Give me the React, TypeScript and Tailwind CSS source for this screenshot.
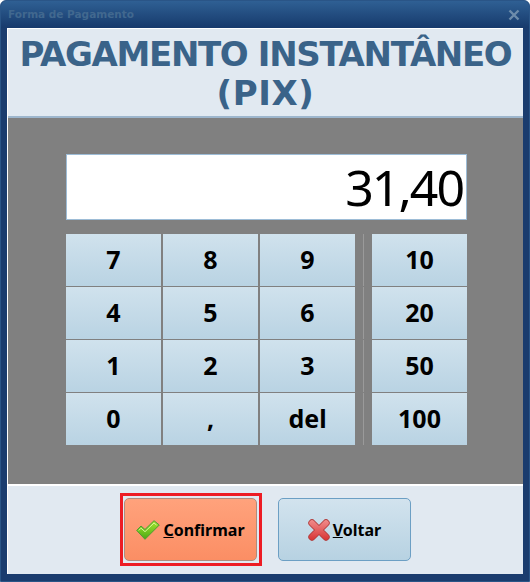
import React from "react";

const font = { fontFamily: '"DejaVu Sans", Verdana, sans-serif' };
const noto = { fontFamily: '"Noto Sans", "DejaVu Sans", sans-serif' };

function Key({ label }: { label: string }) {
  return (
    <button style={noto} className="flex h-[52px] w-[95px] items-center justify-center bg-gradient-to-b from-[#d0e2ed] to-[#b9d3e3] text-[25px] font-bold text-black">
      {label}
    </button>
  );
}

function CheckIcon() {
  return (
    <svg width="24" height="20" viewBox="0 0 24 20" className="shrink-0">
      <defs>
        <linearGradient id="chk" x1="0" y1="0" x2="0" y2="1">
          <stop offset="0" stopColor="#a8e82e" />
          <stop offset="1" stopColor="#4aa814" />
        </linearGradient>
      </defs>
      <path d="M0.7 10.4 L5 6 L9 9.5 L18 0.7 L23.3 5 L9 19.3 Z" fill="url(#chk)" stroke="#4d9a35" strokeWidth="1" strokeLinejoin="round" />
      <path d="M2.8 10.4 L5 8.2 L9 11.7 L18 3 L20.5 5" fill="none" stroke="#d6f59a" strokeWidth="1" />
    </svg>
  );
}

function CrossIcon() {
  return (
    <svg width="22" height="22" viewBox="0 0 22 22" className="shrink-0">
      <defs>
        <linearGradient id="crs" gradientUnits="userSpaceOnUse" x1="0" y1="0" x2="0" y2="22">
          <stop offset="0" stopColor="#f29090" />
          <stop offset="1" stopColor="#d63030" />
        </linearGradient>
      </defs>
      <path d="M4 4 L18 18 M18 4 L4 18" fill="none" stroke="#b23c3c" strokeWidth="7.4" strokeLinecap="round" />
      <path d="M4 4 L18 18 M18 4 L4 18" fill="none" stroke="url(#crs)" strokeWidth="5.6" strokeLinecap="round" />
    </svg>
  );
}

export default function App() {
  const rows = [
    ["7", "8", "9", "10"],
    ["4", "5", "6", "20"],
    ["1", "2", "3", "50"],
    ["0", ",", "del", "100"],
  ];
  return (
    <div style={font} className="flex h-[582px] w-[530px] flex-col overflow-hidden rounded-t-[6px] border border-[#2a5587] bg-[#1a3c6e]">
      <div className="flex h-[27px] shrink-0 items-center justify-between bg-gradient-to-b from-[#2f6094] to-[#173a6c] pl-[7px] pr-[9px]">
        <span className="text-[10.5px] font-bold text-[#41688f]">Forma de Pagamento</span>
        <svg width="12" height="12" viewBox="0 0 12 12">
          <path d="M1.5 1.5 L10.5 10.5 M10.5 1.5 L1.5 10.5" stroke="#6d8cab" strokeWidth="2.4" />
        </svg>
      </div>
      <div className="mx-[6px] flex h-[546px] flex-col border-l border-t border-white bg-[#e1e9f1]">
        <div className="flex h-[89px] shrink-0 flex-col items-center justify-center border-b-2 border-[#9db6cd] pt-[2px] text-center text-[34px] font-bold leading-[39px] tracking-[-1.35px] text-[#3a6389]">
          <div>PAGAMENTO INSTANTÂNEO</div>
          <div className="tracking-[0.6px]">(PIX)</div>
        </div>
        <div className="flex h-[366px] shrink-0 flex-col bg-[#808080] pl-[58px] pt-[36px]">
          <div style={noto} className="flex h-[66px] w-[401px] items-center justify-end border border-[#9dbcd6] bg-white pr-[3px] text-[50px] tracking-[-2px] text-black outline outline-1 -outline-offset-2 outline-white">
            31,40
          </div>
          <div className="mt-[14px] flex flex-col gap-px">
            {rows.map((r) => (
              <div key={r[3]} className="flex">
                <div className="flex gap-[2px]">
                  <Key label={r[0]} />
                  <Key label={r[1]} />
                  <Key label={r[2]} />
                </div>
                <div className="ml-[8px] w-px bg-[#9a9a9a]" />
                <div className="ml-[8px]">
                  <Key label={r[3]} />
                </div>
              </div>
            ))}
          </div>
        </div>
        <div style={noto} className="flex items-start border-t-2 border-white pl-[112px] pt-[7px]">
          <div className="border-[3px] border-[#ed1c24] pb-[2px] pl-px pr-[2px] pt-[2px]">
            <button className="flex h-[63px] w-[133px] items-center justify-center gap-[3px] rounded-[5px] border border-[#b08c7c] bg-gradient-to-b from-[#ffa27c] to-[#fb8e64] text-[16px] font-bold text-black">
              <CheckIcon />
              <span><span className="underline">C</span>onfirmar</span>
            </button>
          </div>
          <button className="ml-[16px] mt-[5px] flex h-[63px] w-[133px] items-center justify-center gap-[3px] rounded-[5px] border border-[#6c9fc4] bg-gradient-to-b from-[#d2e3ee] to-[#b7d2e2] text-[16px] font-bold text-black">
            <CrossIcon />
            <span><span className="underline">V</span>oltar</span>
          </button>
        </div>
      </div>
    </div>
  );
}
